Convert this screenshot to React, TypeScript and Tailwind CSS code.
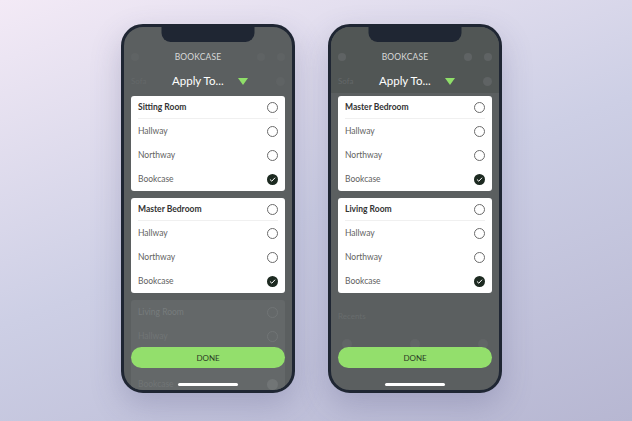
import React from "react";

type Row = { label: string; checked?: boolean };
type Group = { title: string; rows: Row[] };

const font = { fontFamily: "Lato, 'Open Sans', sans-serif" };

const rooms = (title: string): Group => ({
  title,
  rows: [{ label: "Hallway" }, { label: "Northway" }, { label: "Bookcase", checked: true }],
});

function Radio({ checked }: { checked?: boolean }) {
  if (checked) {
    return (
      <svg width="11" height="11" viewBox="0 0 11 11" className="shrink-0">
        <circle cx="5.5" cy="5.5" r="5.5" fill="#1d2a21" />
        <path d="M3.2 5.7 L4.8 7.2 L7.8 4" fill="none" stroke="#ffffff" strokeWidth="1" strokeLinecap="round" strokeLinejoin="round" />
      </svg>
    );
  }
  return <span className="block w-[11px] h-[11px] rounded-full border border-[#6b6b6b] shrink-0" />;
}

function GroupCard({ group }: { group: Group }) {
  return (
    <div className="bg-white rounded-[3px] px-[7px]">
      <div className="h-[23px] flex items-center justify-between border-b border-[#f0f0f0]">
        <span className="text-[8.5px] font-bold text-[#333333]">{group.title}</span>
        <Radio />
      </div>
      {group.rows.map((r) => (
        <div key={r.label} className="h-[24px] flex items-center justify-between">
          <span className="text-[8.5px] text-[#626262]">{r.label}</span>
          <Radio checked={r.checked} />
        </div>
      ))}
    </div>
  );
}

// dimmed group sitting behind the sheet overlay
function FadedCard({ title }: { title: string }) {
  return (
    <div className="bg-[#646869] rounded-[3px] px-[7px] h-[110px]">
      <div className="h-[24px] flex items-center justify-between">
        <span className="text-[8.5px] text-[#777c7d]">{title}</span>
        <span className="block w-[11px] h-[11px] rounded-full border border-[#717576]" />
      </div>
      {["Hallway", "Northway", "Bookcase"].map((l, i) => (
        <div key={l} className="h-[24px] flex items-center justify-between">
          <span className="text-[8.5px] text-[#717576]">{l}</span>
          {i === 2 ? (
            <span className="block w-[11px] h-[11px] rounded-full bg-[#717576]" />
          ) : (
            <span className="block w-[11px] h-[11px] rounded-full border border-[#717576]" />
          )}
        </div>
      ))}
    </div>
  );
}

function Phone({ groups, darkHeader, footer }: { groups: Group[]; darkHeader?: boolean; footer: React.ReactNode }) {
  return (
    <div className="relative w-[174px] h-[369px] rounded-[22px] border-[3px] border-[#1f2633] bg-[#5b5f60] overflow-hidden shadow-[0_12px_30px_rgba(70,70,120,0.25)]">
      <div className="absolute top-0 left-1/2 -translate-x-1/2 w-[93px] h-[15px] bg-[#1f2633] rounded-b-[9px]" />
      <div className={darkHeader ? "bg-[#515655] h-[66px] pt-[24px]" : "h-[66px] pt-[24px]"}>
        <div className="flex items-center justify-between px-[7px] h-[12px]">
          <span className="block w-[8px] h-[8px] rounded-full bg-[#5f6364]" />
          <span className="text-[8.5px] tracking-[0.02em] text-[#d8d9d9]">BOOKCASE</span>
          <div className="flex gap-[12px]">
            <span className="block w-[8px] h-[8px] rounded-full bg-[#5f6364]" />
            <span className="block w-[8px] h-[8px] rounded-full bg-[#5f6364]" />
          </div>
        </div>
        <div className="mt-[10px] flex items-center px-[7px] h-[16px]">
          <span className="w-[41px] text-[8px] text-[#646869]">Sofa</span>
          <span className="text-[11.5px] text-white">Apply To...</span>
          <svg width="10" height="7" viewBox="0 0 10 7" className="ml-[14px] mt-[1px]">
            <path d="M0 0 H10 L5 7 Z" fill="#8fdf69" />
          </svg>
          <span className="ml-auto block w-[9px] h-[9px] rounded-full bg-[#5f6364]" />
        </div>
      </div>
      <div className="px-[7px] pt-[3px] flex flex-col gap-[7px]">
        {groups.map((g) => (
          <GroupCard key={g.title} group={g} />
        ))}
        {footer}
      </div>
      <button className="absolute left-[7px] right-[7px] bottom-[22px] h-[21px] rounded-full bg-[#93df6c] text-[8px] text-[#2c3a26]">
        DONE
      </button>
      <div className="absolute bottom-[4px] left-1/2 -translate-x-1/2 w-[60px] h-[3px] rounded-full bg-white" />
    </div>
  );
}

export default function App() {
  return (
    <div
      className="w-[632px] h-[421px] overflow-hidden antialiased bg-linear-[160deg] from-[#f3eaf6] via-[#cdcfe5] to-[#b7b7d2]"
      style={font}
    >
      <div className="flex gap-[33px] pl-[121px] pt-[24px]">
        <Phone
          groups={[rooms("Sitting Room"), rooms("Master Bedroom")]}
          footer={<FadedCard title="Living Room" />}
        />
        <Phone
          darkHeader
          groups={[rooms("Master Bedroom"), rooms("Living Room")]}
          footer={
            <div className="pt-[1px]">
              <span className="text-[8px] text-[#686c6d]">Recents</span>
              <div className="mt-[14px] flex justify-between px-[4px]">
                <span className="block w-[10px] h-[10px] rounded-full bg-[#616566]" />
                <span className="block w-[10px] h-[10px] rounded-full bg-[#616566]" />
                <span className="block w-[10px] h-[10px] rounded-full bg-[#616566]" />
              </div>
            </div>
          }
        />
      </div>
    </div>
  );
}
